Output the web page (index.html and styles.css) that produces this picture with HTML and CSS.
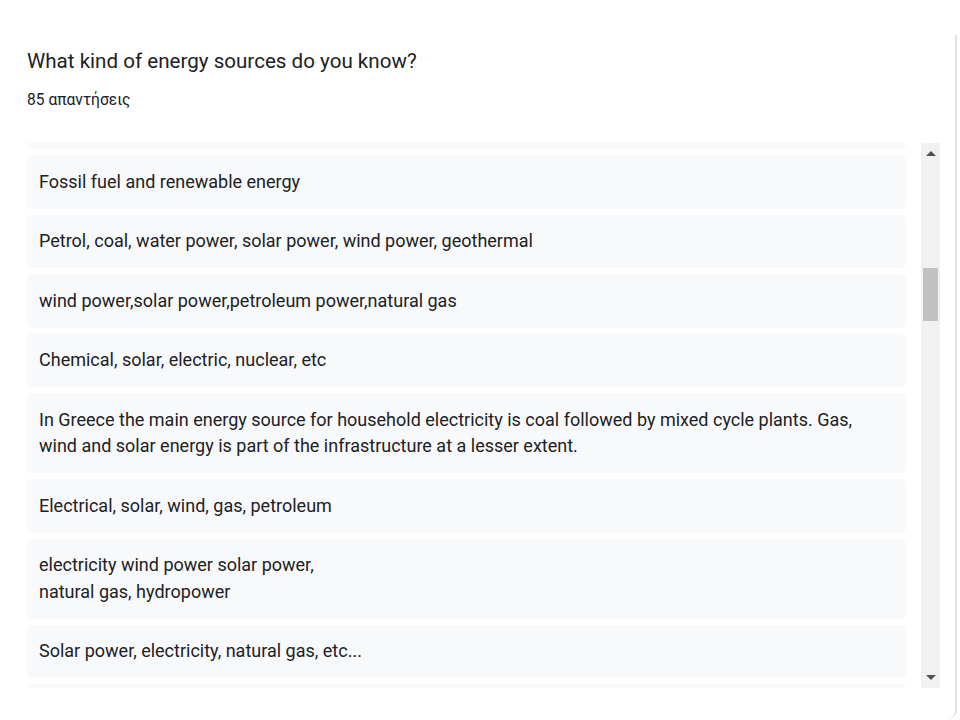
FILE: index.html
```html
<!DOCTYPE html>
<html lang="en">
<head>
    <meta charset="UTF-8">
    <meta name="viewport" content="width=device-width, initial-scale=1.0">
    <title>Responses</title>
    <link rel="stylesheet" href="styles.css">
</head>
<body>

<div class="card">
    <div class="card-header">
        <h2 class="question">What kind of energy sources do you know?</h2>
        <div class="count">85 απαντήσεις</div>
    </div>

    <div class="answers">
        <!-- list is scrolled a bit, first row only shows its bottom edge -->
        <div class="answers-view">
            <div class="answers-list">
                <div class="answer">Solar, wind, coal, oil</div>
                <div class="answer">Fossil fuel and renewable energy</div>
                <div class="answer">Petrol, coal, water power, solar power, wind power, geothermal</div>
                <div class="answer">wind power,solar power,petroleum power,natural gas</div>
                <div class="answer">Chemical, solar, electric, nuclear, etc</div>
                <div class="answer">In Greece the main energy source for household electricity is coal followed by mixed cycle plants. Gas, wind and solar energy is part of the infrastructure at a lesser extent.</div>
                <div class="answer">Electrical, solar, wind, gas, petroleum</div>
                <div class="answer">electricity wind power solar power,
natural gas, hydropower</div>
                <div class="answer">Solar power, electricity, natural gas, etc...</div>
                <div class="answer">Wind, solar, water</div>
            </div>
        </div>
        <div class="scrollbar">
            <div class="arrow arrow-up"></div>
            <div class="track">
                <div class="thumb"></div>
            </div>
            <div class="arrow arrow-down"></div>
        </div>
    </div>
</div>

</body>
</html>
```

FILE: styles.css
```css
body {
    margin: 0;
    background: #fff;
    font-family: Roboto, "Noto Sans", Arial, sans-serif;
    color: #202124;
}
.card {
    width: 955px;
    height: 684px;
    margin-top: 35px;
    border-right: 2px solid #dce6e3;
    border-bottom-right-radius: 9px;
    background: #fff;
}
.card-header {
    padding: 12px 0 0 27px;
    height: 96px;
}
.question {
    margin: 0;
    font-size: 20.6px;
    font-weight: 400;
    line-height: 28px;
    color: #202124;
}
.count {
    margin-top: 15px;
    font-size: 15.6px;
    line-height: 20px;
    color: #202124;
}
.answers {
    display: flex;
    margin-left: 27px;
    width: 913px;
    height: 545px;
}
.answers-view {
    flex: 1;
    overflow: hidden;
    padding-right: 15px;
}
.answers-list {
    margin-top: -47.5px;
}
.answer {
    background: #f8f9fa;
    border-radius: 5px;
    padding: 13.5px 12px;
    margin-bottom: 6px;
    font-size: 18px;
    line-height: 26.5px;
    color: #202124;
    white-space: pre-line;
}
.scrollbar {
    width: 19px;
    background: #f1f1f1;
    display: flex;
    flex-direction: column;
}
.arrow {
    height: 21px;
    display: flex;
    align-items: center;
    justify-content: center;
}
.arrow-up::before {
    content: "";
    border-left: 5px solid transparent;
    border-right: 5px solid transparent;
    border-bottom: 5px solid #505050;
}
.arrow-down::before {
    content: "";
    border-left: 5px solid transparent;
    border-right: 5px solid transparent;
    border-top: 5px solid #505050;
}
.track {
    flex: 1;
    padding: 104px 2px 0;
}
.thumb {
    height: 53px;
    background: #c1c1c1;
}
```
